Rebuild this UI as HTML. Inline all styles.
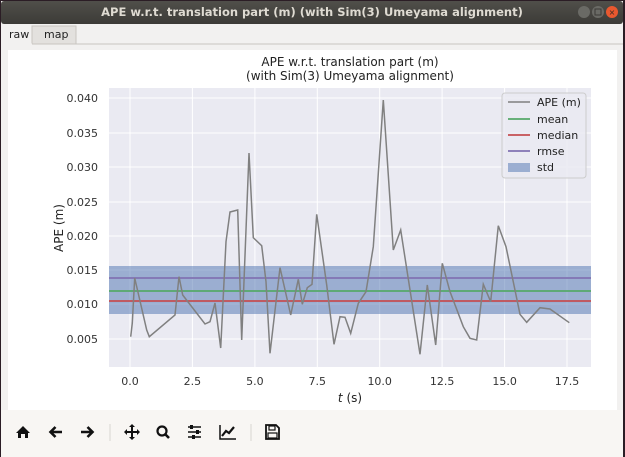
<!DOCTYPE html>
<html><head><meta charset="utf-8"><style>
html,body{margin:0;padding:0;width:625px;height:457px;overflow:hidden;background:#2b2a28}
</style></head><body>
<svg width="625" height="457" xmlns="http://www.w3.org/2000/svg" font-family="DejaVu Sans, Liberation Sans, sans-serif">
<defs><linearGradient id="tb" x1="0" y1="0" x2="0" y2="1"><stop offset="0" stop-color="#504f4a"/><stop offset="1" stop-color="#3c3b37"/></linearGradient></defs>
<rect x="0" y="0" width="625" height="457" fill="#2b1d25"/>
<rect x="1" y="1" width="622" height="456" fill="#f2f1f0"/>
<rect x="1" y="1" width="622" height="23" fill="url(#tb)" rx="3"/>
<text x="312" y="16" text-anchor="middle" font-size="11.5" font-weight="bold" fill="#dfdbd2" font-family="DejaVu Sans, sans-serif">APE w.r.t. translation part (m) (with Sim(3) Umeyama alignment)</text>
<circle cx="584" cy="12" r="6" fill="#6a6a65"/><circle cx="598" cy="12" r="6" fill="#6a6a65"/><rect x="595" y="9" width="6" height="6" fill="none" stroke="#3c3b37" stroke-width="1"/>
<circle cx="612" cy="12" r="6" fill="#e9582f"/>
<text x="612" y="15" text-anchor="middle" font-size="8" fill="#3c2c20">×</text>
<!-- tabs -->
<rect x="1" y="24" width="622" height="20" fill="#f2f1f0"/>
<rect x="32" y="26" width="44" height="18" fill="#e3e1de" stroke="#c8c5c0"/>
<line x1="1" y1="44" x2="623" y2="44" stroke="#c8c5c0"/>
<line x1="1" y1="44" x2="32" y2="44" stroke="#f2f1f0"/>
<text x="9" y="38" font-size="11" fill="#222">raw</text>
<text x="44" y="38" font-size="11" fill="#222">map</text>
<!-- figure -->
<rect x="8" y="50" width="609" height="360" fill="#ffffff"/>
<rect x="1" y="410" width="622" height="47" fill="#f8f6f3"/>
<rect x="8" y="50" width="609" height="360" fill="#ffffff"/>
<text x="350" y="66" text-anchor="middle" font-size="12" fill="#222">APE w.r.t. translation part (m)</text>
<text x="350" y="80" text-anchor="middle" font-size="12" fill="#222">(with Sim(3) Umeyama alignment)</text>
<rect x="109" y="88" width="482" height="279" fill="#eaeaf2"/>
<g stroke="#ffffff" stroke-width="1">
<line x1="130" y1="88" x2="130" y2="367"/><line x1="192.4" y1="88" x2="192.4" y2="367"/><line x1="254.9" y1="88" x2="254.9" y2="367"/><line x1="317.3" y1="88" x2="317.3" y2="367"/><line x1="379.7" y1="88" x2="379.7" y2="367"/><line x1="442.1" y1="88" x2="442.1" y2="367"/><line x1="504.6" y1="88" x2="504.6" y2="367"/><line x1="567" y1="88" x2="567" y2="367"/>
<line x1="109" y1="98" x2="591" y2="98"/><line x1="109" y1="133" x2="591" y2="133"/><line x1="109" y1="167" x2="591" y2="167"/><line x1="109" y1="202" x2="591" y2="202"/><line x1="109" y1="236" x2="591" y2="236"/><line x1="109" y1="270" x2="591" y2="270"/><line x1="109" y1="304" x2="591" y2="304"/><line x1="109" y1="339" x2="591" y2="339"/>
</g>
<rect x="109" y="266" width="482" height="48" fill="#4c72b0" fill-opacity="0.5"/>
<line x1="109" y1="278" x2="591" y2="278" stroke="#8172b2" stroke-width="1.8"/>
<line x1="109" y1="291" x2="591" y2="291" stroke="#55a868" stroke-width="1.8"/>
<line x1="109" y1="301" x2="591" y2="301" stroke="#c44e52" stroke-width="1.8"/>
<polyline fill="none" stroke="#808080" stroke-width="1.5" points="130.7,336.7 132.3,323 134.7,278 146.7,330 149.3,336.7 175,315 179,276.7 182.7,295 205,324 210,321.7 215,303 220.7,348 226,241.7 230,212 237.7,210 241.7,340 249,153 253.3,237.7 261.7,245.7 266,281.7 270,353.3 280,267.7 290.7,315 298.3,279.3 302.3,304.3 307.3,287.7 312,284.3 316.7,214.3 326.7,285 334,344.3 340,316.7 345,317.3 350.7,333.3 358.3,303.3 366,291.7 373.3,246.7 383.3,100 393.3,250 400.7,230 420,354.3 427.3,285 435.7,345 442.3,263.3 450,291.7 463.3,326.7 470,338.3 476.7,340 483.3,284.3 490.7,301.7 498.3,225.7 506,246.7 520,314.3 526.7,322.3 540,307.7 550,309 569.3,322.7"/>
<!-- legend -->
<rect x="502" y="93" width="84" height="85" rx="3" fill="#eaeaf2" fill-opacity="0.85" stroke="#cccccc"/>
<g font-size="11" fill="#222">
<line x1="508" y1="102" x2="530" y2="102" stroke="#808080" stroke-width="1.5"/><text x="537" y="106">APE (m)</text>
<line x1="508" y1="119" x2="530" y2="119" stroke="#55a868" stroke-width="1.8"/><text x="537" y="123">mean</text>
<line x1="508" y1="135" x2="530" y2="135" stroke="#c44e52" stroke-width="1.8"/><text x="537" y="139">median</text>
<line x1="508" y1="151" x2="530" y2="151" stroke="#8172b2" stroke-width="1.8"/><text x="537" y="155">rmse</text>
<rect x="508" y="163" width="22" height="9" fill="#4c72b0" fill-opacity="0.5"/><text x="537" y="171">std</text>
</g>
<g font-size="11" fill="#333" text-anchor="end">
<text x="98" y="102">0.040</text><text x="98" y="137">0.035</text><text x="98" y="171">0.030</text><text x="98" y="206">0.025</text><text x="98" y="240">0.020</text><text x="98" y="274">0.015</text><text x="98" y="308">0.010</text><text x="98" y="343">0.005</text>
</g>
<g font-size="11" fill="#333" text-anchor="middle">
<text x="130" y="385">0.0</text><text x="192.4" y="385">2.5</text><text x="254.9" y="385">5.0</text><text x="317.3" y="385">7.5</text><text x="379.7" y="385">10.0</text><text x="442.1" y="385">12.5</text><text x="504.6" y="385">15.0</text><text x="567" y="385">17.5</text>
</g>
<text x="350" y="402" text-anchor="middle" font-size="12" fill="#222"><tspan font-style="italic">t</tspan> (s)</text>
<text transform="translate(63,228) rotate(-90)" text-anchor="middle" font-size="12" fill="#222">APE (m)</text>
<!-- toolbar -->
<g fill="#111" stroke="#111">
<path d="M16 433 L23 426 L30 433 L28 433 L28 438 L25 438 L25 434 L21 434 L21 438 L18 438 L18 433 Z" stroke="none"/>
<path d="M62 432 H51 M55.5 427 L50.5 432 L55.5 437" fill="none" stroke-width="2.6"/>
<path d="M81 432 H92 M87.5 427 L92.5 432 L87.5 437" fill="none" stroke-width="2.6"/>
<line x1="110" y1="424" x2="110" y2="441" stroke="#d8d6d2"/>
<path d="M132 425 V439 M125 432 H139" stroke-width="2"/>
<path d="M129 427 L132 424 L135 427 Z M129 437 L132 440 L135 437 Z M127 429 L124 432 L127 435 Z M137 429 L140 432 L137 435 Z" stroke="none"/>
<circle cx="162" cy="431" r="4.5" fill="none" stroke-width="2.2"/><path d="M165 434 L169 438" stroke-width="2.6"/>
<path d="M188 427 H201 M188 432 H201 M188 437 H201" stroke-width="1.5"/><rect x="190" y="425" width="3" height="4" stroke="none"/><rect x="196" y="430" width="3" height="4" stroke="none"/><rect x="192" y="435" width="3" height="4" stroke="none"/>
<path d="M220 425 V439 H236" fill="none" stroke-width="1.5"/><path d="M222 436 L226 431 L229 433 L234 427" fill="none" stroke-width="2.2"/>
<line x1="251" y1="424" x2="251" y2="441" stroke="#d8d6d2"/>
<path d="M266 425 H276 L279 428 V439 H266 Z" fill="none" stroke-width="1.8"/><rect x="269" y="426" width="6" height="4" fill="none" stroke-width="1.2"/><rect x="268" y="433" width="9" height="5" fill="none" stroke-width="1.2"/>
</g>
</svg>
</body></html>
